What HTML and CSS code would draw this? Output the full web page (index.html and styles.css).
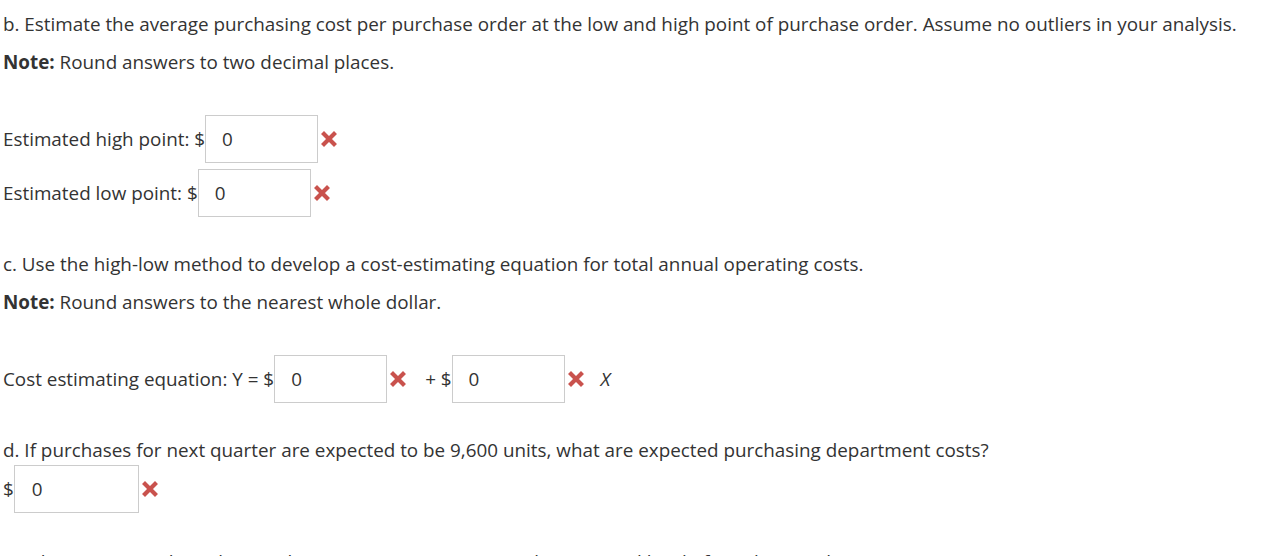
FILE: index.html
```html
<!DOCTYPE html>
<html>
<head>
<meta charset="utf-8">
<link rel="stylesheet" href="styles.css">
</head>
<body>
<div class="page">
  <p class="q">b. Estimate the average purchasing cost per purchase order at the low and high point of purchase order. Assume no outliers in your analysis.</p>
  <p class="q note"><b>Note:</b> Round answers to two decimal places.</p>

  <div class="row r-high">
    <span class="lbl">Estimated high point: $</span>
    <span class="box">0</span>
    <svg class="x" viewBox="0 0 16 16"><path d="M3 3 L13 13 M13 3 L3 13"/></svg>
  </div>
  <div class="row r-low">
    <span class="lbl">Estimated low point: $</span>
    <span class="box">0</span>
    <svg class="x" viewBox="0 0 16 16"><path d="M3 3 L13 13 M13 3 L3 13"/></svg>
  </div>

  <p class="q q-c">c. Use the high-low method to develop a cost-estimating equation for total annual operating costs.</p>
  <p class="q note"><b>Note:</b> Round answers to the nearest whole dollar.</p>

  <div class="row r-eq">
    <span class="lbl">Cost estimating equation: Y = $</span>
    <span class="box">0</span>
    <svg class="x" viewBox="0 0 16 16"><path d="M3 3 L13 13 M13 3 L3 13"/></svg>
    <span class="lbl plus">+ $</span>
    <span class="box">0</span>
    <svg class="x" viewBox="0 0 16 16"><path d="M3 3 L13 13 M13 3 L3 13"/></svg>
    <span class="var">X</span>
  </div>

  <p class="q q-d">d. If purchases for next quarter are expected to be 9,600 units, what are expected purchasing department costs?</p>
  <div class="row r-d">
    <span class="lbl">$</span>
    <span class="box wide">0</span>
    <svg class="x" viewBox="0 0 16 16"><path d="M3 3 L13 13 M13 3 L3 13"/></svg>
  </div>

  <p class="q q-e">e. What is expected purchasing department cost per unit at the expected level of purchase orders, Q?</p>
</div>
</body>
</html>
```

FILE: styles.css
```css
html, body {
  margin: 0;
  padding: 0;
  background: #ffffff;
}
.page {
  padding: 11px 3px 0 3px;
  font-family: "Open Sans", "DejaVu Sans", sans-serif;
  font-size: 18.85px;
  color: #333333;
  display: flex;
  flex-direction: column;
  align-items: flex-start;
}
.q {
  margin: 0;
  line-height: 27px;
  white-space: nowrap;
}
.note {
  margin-top: 11px;
}
.note b {
  font-weight: 700;
}
.row {
  display: flex;
  align-items: center;
  height: 48px;
}
.r-high { margin-top: 39px; }
.r-low { margin-top: 6px; }
.q-c { margin-top: 34px; }
.r-eq { margin-top: 39px; }
.q-d { margin-top: 34px; }
.r-d { margin-top: 1px; }
.q-e { margin-top: 36px; }

.lbl {
  line-height: 27px;
}
.box {
  box-sizing: border-box;
  width: 113px;
  height: 48px;
  border: 1px solid #cccccc;
  padding-left: 16px;
  display: flex;
  align-items: center;
}
.box.wide {
  width: 125px;
  padding-left: 17px;
}
.x {
  width: 16px;
  height: 16px;
  margin-left: 3px;
  fill: none;
  stroke: #c9524d;
  stroke-width: 4.2;
  stroke-linecap: square;
}
.plus {
  margin-left: 19px;
}
.var {
  font-style: italic;
  margin-left: 17px;
}
```
